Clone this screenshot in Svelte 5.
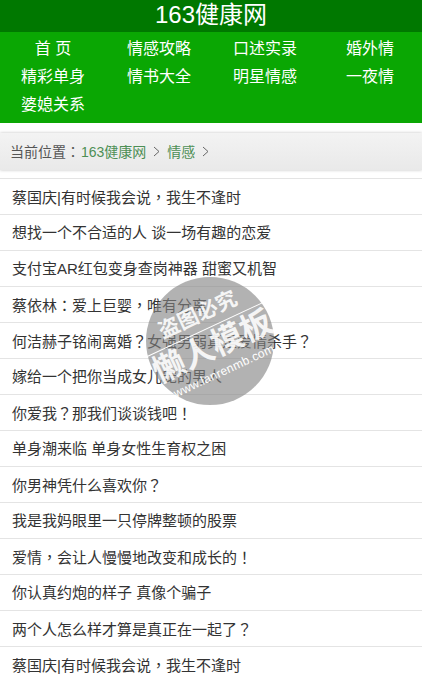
<script>
  const nav = ['首 页','情感攻略','口述实录','婚外情','精彩单身','情书大全','明星情感','一夜情','婆媳关系'];
  const items = ['蔡国庆|有时候我会说，我生不逢时','想找一个不合适的人 谈一场有趣的恋爱','支付宝AR红包变身查岗神器 甜蜜又机智','蔡依林：爱上巨婴，唯有分离','何洁赫子铭闹离婚？女强男弱真是爱情杀手？','嫁给一个把你当成女儿宠的男人','你爱我？那我们谈谈钱吧！','单身潮来临 单身女性生育权之困','你男神凭什么喜欢你？','我是我妈眼里一只停牌整顿的股票','爱情，会让人慢慢地改变和成长的！','你认真约炮的样子 真像个骗子','两个人怎么样才算是真正在一起了？','蔡国庆|有时候我会说，我生不逢时'];
  const parts = (t) => t.split(/([，？！：])/);
</script>

<div class="page">
  <header>163健康网</header>
  <nav>
    {#each nav as n}<a href="#top">{n}</a>{/each}
  </nav>
  <div class="crumb">
    <span class="here">当前位置<span class="punct">：</span></span><a href="#top">163健康网</a>
    <svg class="chev" width="7" height="11" viewBox="0 0 7 11"><path d="M1 1l5 4.5L1 10" fill="none" stroke="#666" stroke-width="1"/></svg>
    <a href="#top">情感</a>
    <svg class="chev" width="7" height="11" viewBox="0 0 7 11"><path d="M1 1l5 4.5L1 10" fill="none" stroke="#666" stroke-width="1"/></svg>
  </div>
  <ul>
    {#each items as t}<li>{#each parts(t) as p, i}{#if i % 2}<span class="punct">{p}</span>{:else}{p}{/if}{/each}</li>{/each}
  </ul>
  <div class="mark">
    <div class="inner">
      <div class="m1">盗图必究</div>
      <div class="rule"></div>
      <div class="m2">懒人模板</div>
      <div class="m3">www.lanrenmb.com</div>
    </div>
  </div>
</div>

<style>
  :global(body) { margin: 0; background: #fff; }
  .page { width: 422px; height: 682px; overflow: hidden; position: relative; font-family: "Liberation Sans", "Noto Sans CJK SC", sans-serif; }
  .punct { font-family: "Noto Sans CJK TC", sans-serif; }
  header { height: 32px; line-height: 29px; background: #007800; color: #fff; text-align: center; font-size: 24px; }
  nav { background: #0aa703; height: 91px; padding-top: 3px; box-sizing: border-box; display: grid; grid-template-columns: 106px 106px 106px 104px; grid-auto-rows: 28px; }
  nav a { color: #fff; text-decoration: none; font-size: 16px; line-height: 28px; text-align: center; }
  .crumb { margin-top: 10px; height: 37px; box-sizing: border-box; padding: 0 0 1px 10px; display: flex; align-items: center; font-size: 14px; color: #555; background: linear-gradient(#f3f3f3, #e9e9e9); box-shadow: 0 0 3px rgba(0,0,0,.25); }
  .here { margin-right: 1px; }
  .crumb a { color: #4d8f55; text-decoration: none; }
  .chev { margin: 0 7px; }
  ul { list-style: none; margin: 8px 0 0; padding: 0; border-top: 1px solid #e4e4e4; }
  li { height: 36px; box-sizing: border-box; border-bottom: 1px solid #e4e4e4; padding-left: 12px; font-size: 15px; line-height: 35px; color: #333; white-space: nowrap; }
  .mark { position: absolute; left: 146px; top: 277px; width: 128px; height: 128px; border-radius: 50%; background: rgba(130,130,130,.62); }
  .inner { position: absolute; left: 0; top: 0; width: 128px; height: 128px; transform: rotate(-25deg); color: rgba(255,255,255,.88); text-align: center; white-space: nowrap; }
  .m1 { font-size: 21px; font-weight: 700; line-height: 24px; margin-top: 23px; }
  .rule { height: 1px; background: #fff; margin: 4px 0 0; }
  .m2 { font-size: 32px; font-weight: 700; line-height: 38px; margin: -1px -3px 0; }
  .m3 { font-size: 12px; line-height: 14px; letter-spacing: .3px; margin-top: 1px; color: #fff; }
</style>
